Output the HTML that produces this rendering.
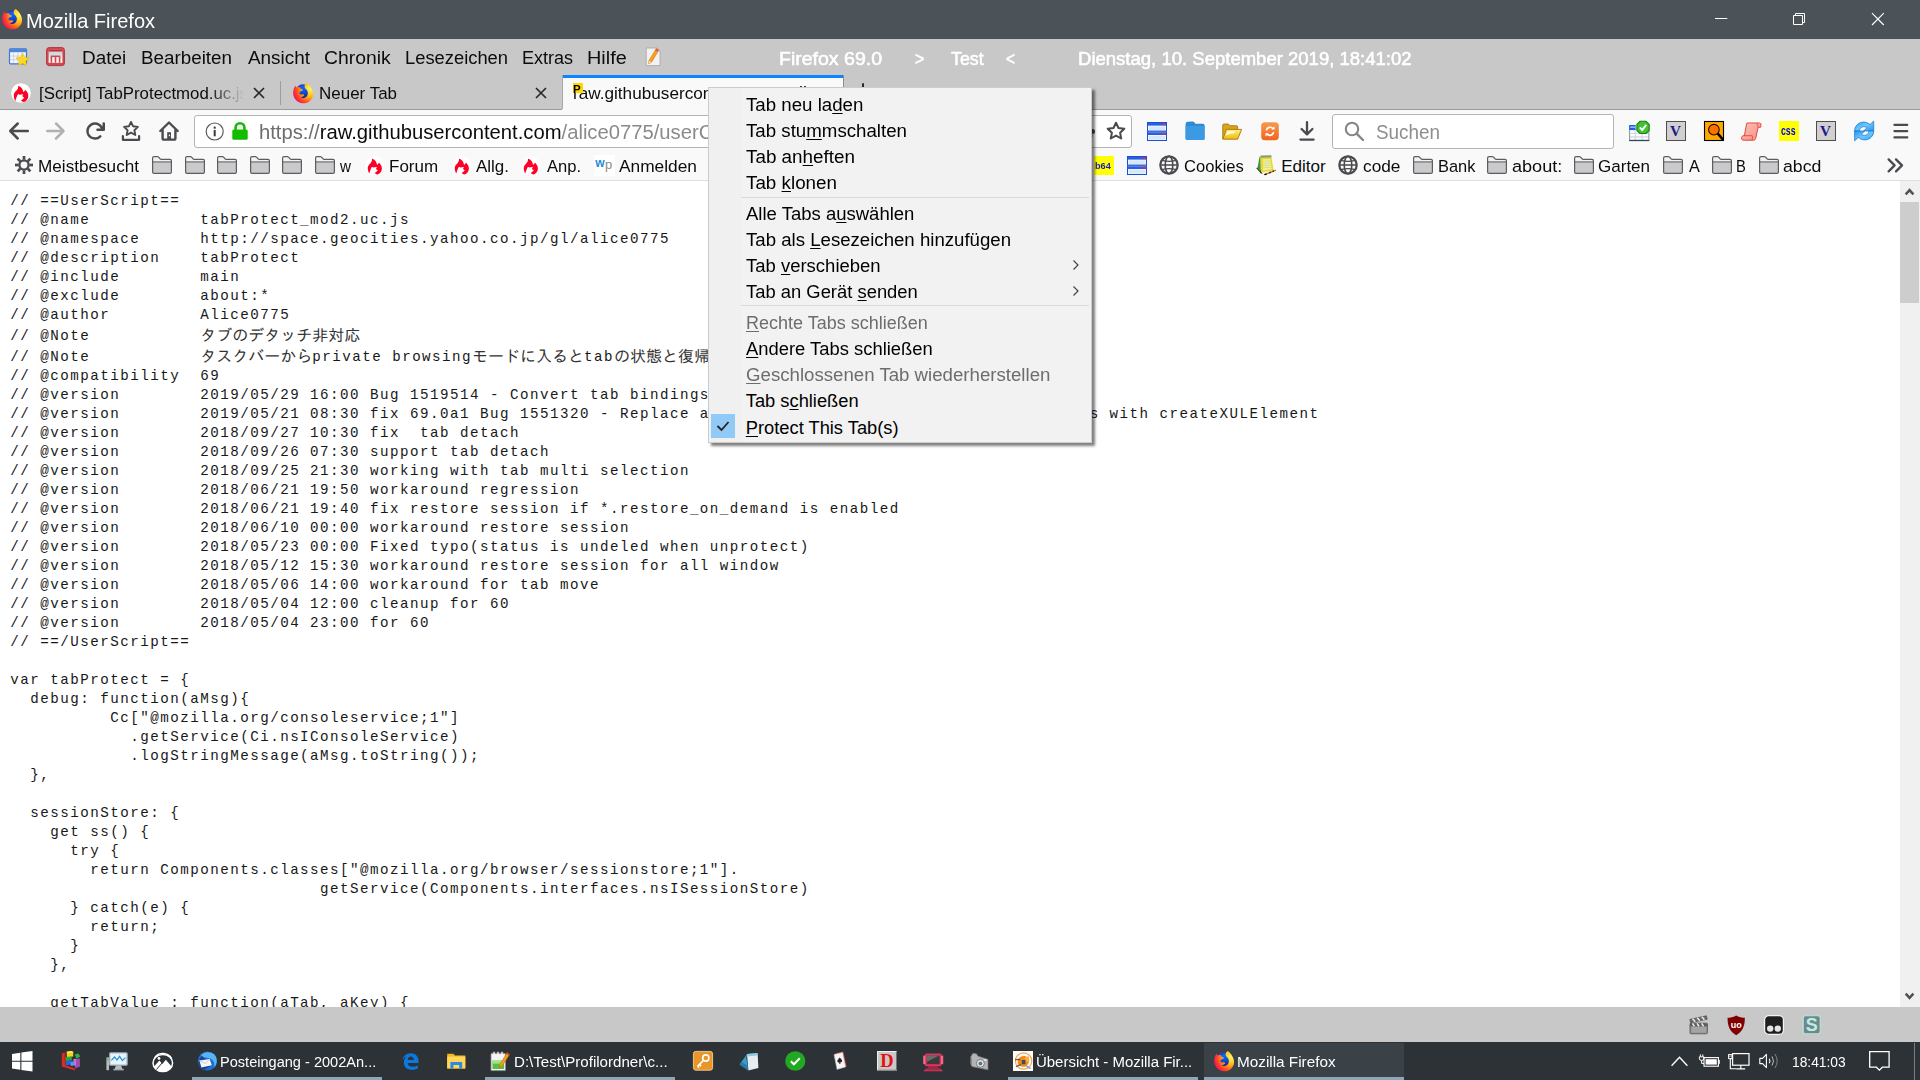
<!DOCTYPE html>
<html lang="de"><head><meta charset="utf-8"><title>Mozilla Firefox</title>
<style>
html,body{margin:0;padding:0;}
body{width:1920px;height:1080px;overflow:hidden;position:relative;background:#fff;font-family:"Liberation Sans",sans-serif;}
.t{position:absolute;white-space:nowrap;line-height:1;transform-origin:0 0;}
.a{position:absolute;}
svg{position:absolute;overflow:visible;}
u{text-decoration:underline;text-underline-offset:2px;text-decoration-thickness:1px;}
pre{margin:0;}
.jp{position:relative;top:1px;letter-spacing:0;font-family:"Liberation Mono","IPAGothic","Noto Sans CJK JP",monospace;font-size:16px;color:#333;}
.jl{display:inline-block;height:21px;line-height:19px;padding-top:2px;box-sizing:border-box;vertical-align:top;}

</style></head>
<body>
<div class="a" style="left:0px;top:0px;width:1920px;height:39px;background:#4b5359;"></div>
<div class="a" style="left:0px;top:39px;width:1920px;height:71px;background:#c8c8c8;"></div>
<div class="a" style="left:0px;top:109px;width:1920px;height:1px;background:#9a9a9a;"></div>
<div class="a" style="left:0px;top:110px;width:1920px;height:70px;background:#f9f9fa;"></div>
<div class="a" style="left:0px;top:180px;width:1920px;height:1px;background:#dedede;"></div>
<div class="a" style="left:0px;top:181px;width:1920px;height:826px;background:#fff;"></div>
<div class="a" style="left:0px;top:1007px;width:1920px;height:35px;background:#c8c8c8;"></div>
<div class="a" style="left:0px;top:1042px;width:1920px;height:38px;background:#2d3237;"></div>
<span class="t" style="left:25.97px;top:11.64px;font-size:19.8px;color:#fff;transform:scaleX(1.0119);">Mozilla Firefox</span>
<span class="t" style="left:82.44px;top:49.21px;font-size:18.3px;color:#0c0c0d;transform:scaleX(1.0345);">Datei</span>
<span class="t" style="left:141.48px;top:49.21px;font-size:18.3px;color:#0c0c0d;transform:scaleX(1.0295);">Bearbeiten</span>
<span class="t" style="left:247.50px;top:49.21px;font-size:18.3px;color:#0c0c0d;transform:scaleX(1.0341);">Ansicht</span>
<span class="t" style="left:323.99px;top:49.21px;font-size:18.3px;color:#0c0c0d;transform:scaleX(1.0573);">Chronik</span>
<span class="t" style="left:404.98px;top:49.21px;font-size:18.3px;color:#0c0c0d;transform:scaleX(1.0037);">Lesezeichen</span>
<span class="t" style="left:521.96px;top:49.21px;font-size:18.3px;color:#0c0c0d;transform:scaleX(0.9860);">Extras</span>
<span class="t" style="left:586.95px;top:49.21px;font-size:18.3px;color:#0c0c0d;transform:scaleX(1.0851);">Hilfe</span>
<span class="t" style="left:779.49px;top:50.01px;font-size:18.3px;color:#fff;transform:scaleX(1.0672);-webkit-text-stroke:0.55px #fff;">Firefox 69.0</span>
<span class="t" style="left:914.80px;top:50.01px;font-size:18.3px;color:#fff;transform:scaleX(0.8799);-webkit-text-stroke:0.55px #fff;">&gt;</span>
<span class="t" style="left:951.00px;top:50.01px;font-size:18.3px;color:#fff;transform:scaleX(0.9723);-webkit-text-stroke:0.55px #fff;">Test</span>
<span class="t" style="left:1006.00px;top:50.01px;font-size:18.3px;color:#fff;transform:scaleX(0.8421);-webkit-text-stroke:0.55px #fff;">&lt;</span>
<span class="t" style="left:1077.70px;top:50.01px;font-size:18.3px;color:#fff;transform:scaleX(1.0131);-webkit-text-stroke:0.55px #fff;">Dienstag, 10. September 2019, 18:41:02</span>
<div class="a" style="left:39px;top:80px;width:206px;height:26px;overflow:hidden;-webkit-mask-image:linear-gradient(to right,#000 170px,transparent 205px);mask-image:linear-gradient(to right,#000 170px,transparent 205px);">
<span class="t" style="left:-0.51px;top:5.22px;font-size:17.1px;color:#0c0c0d;transform:scaleX(0.9836);">[Script] TabProtectmod.uc.js</span>
</div>
<div class="a" style="left:280px;top:81px;width:1px;height:24px;background:#9e9e9e;"></div>
<span class="t" style="left:319.49px;top:85.22px;font-size:17.1px;color:#0c0c0d;transform:scaleX(0.9930);">Neuer Tab</span>
<div class="a" style="left:562px;top:75px;width:282px;height:35px;background:#f9f9fa;"></div>
<div class="a" style="left:562px;top:75px;width:1px;height:34px;background:#a8a8a8;"></div>
<div class="a" style="left:843px;top:75px;width:1px;height:34px;background:#8e8e8e;"></div>
<div class="a" style="left:563px;top:75px;width:280px;height:3px;background:#0a84ff;"></div>
<span class="t" style="left:573.20px;top:85.22px;font-size:17.1px;color:#0c0c0d;transform:scaleX(1.0044);">raw.githubusercontent.com/alice0775</span>
<div class="a" style="left:573px;top:83px;width:10px;height:10.4px;background:#ffd800;"></div>
<span class="t" style="left:573.27px;top:84.50px;font-size:10.4px;color:#000;font-weight:700;transform:scaleX(1.1109);">P</span>
<div class="a" style="left:862px;top:83.4px;width:2px;height:18px;background:#2a2a2e;border-radius:1px;"></div>
<div class="a" style="left:800.3px;top:86px;width:1.6px;height:1px;background:#3a3a3a;"></div>
<div class="a" style="left:804.3px;top:86px;width:1.6px;height:1px;background:#3a3a3a;"></div>
<div class="a" style="left:194px;top:115px;width:936px;height:31px;background:#fff;border:1px solid #b4b4b6;border-radius:3px;"></div>
<span class="t" style="left:259.00px;top:122.09px;font-size:20.1px;color:#0c0c0d;transform:scaleX(1.0068);"><span style="color:#6d6d6e">https://</span>raw.githubusercontent.com<span style="color:#8a8a8b">/alice0775/userChrome.js/master/69/tabProtect_mod2.uc.js</span></span>
<div class="a" style="left:1332px;top:114px;width:280px;height:33px;background:#fff;border:1px solid #b4b4b6;border-radius:3px;"></div>
<span class="t" style="left:1376.48px;top:122.09px;font-size:20.1px;color:#8e8e90;transform:scaleX(0.9396);">Suchen</span>
<span class="t" style="left:38.48px;top:158.22px;font-size:17.1px;color:#0c0c0d;transform:scaleX(1.0030);">Meistbesucht</span>
<span class="t" style="left:340.00px;top:158.22px;font-size:17.1px;color:#0c0c0d;transform:scaleX(0.8900);">w</span>
<span class="t" style="left:388.96px;top:158.22px;font-size:17.1px;color:#0c0c0d;transform:scaleX(0.9939);">Forum</span>
<span class="t" style="left:476.00px;top:158.22px;font-size:17.1px;color:#0c0c0d;transform:scaleX(0.9930);">Allg.</span>
<span class="t" style="left:547.00px;top:158.22px;font-size:17.1px;color:#0c0c0d;transform:scaleX(0.9676);">Anp.</span>
<span class="t" style="left:619.00px;top:158.22px;font-size:17.1px;color:#0c0c0d;transform:scaleX(1.0134);">Anmelden</span>
<span class="t" style="left:1183.58px;top:158.22px;font-size:17.1px;color:#0c0c0d;transform:scaleX(0.9687);">Cookies</span>
<span class="t" style="left:1281.17px;top:158.22px;font-size:17.1px;color:#0c0c0d;">Editor</span>
<span class="t" style="left:1362.65px;top:158.22px;font-size:17.1px;color:#0c0c0d;transform:scaleX(1.0110);">code</span>
<span class="t" style="left:1437.77px;top:158.22px;font-size:17.1px;color:#0c0c0d;transform:scaleX(0.9608);">Bank</span>
<span class="t" style="left:1511.65px;top:158.22px;font-size:17.1px;color:#0c0c0d;transform:scaleX(1.0582);">about:</span>
<span class="t" style="left:1598.47px;top:158.22px;font-size:17.1px;color:#0c0c0d;transform:scaleX(0.9958);">Garten</span>
<span class="t" style="left:1688.60px;top:158.22px;font-size:17.1px;color:#0c0c0d;transform:scaleX(0.9483);">A</span>
<span class="t" style="left:1736.21px;top:158.22px;font-size:17.1px;color:#0c0c0d;transform:scaleX(0.8628);">B</span>
<span class="t" style="left:1783.34px;top:158.22px;font-size:17.1px;color:#0c0c0d;transform:scaleX(1.0338);">abcd</span>
<div class="a" id="content" style="left:0;top:181px;width:1900px;height:826px;overflow:hidden;">
<pre style="position:absolute;left:10.3px;top:11px;font-family:'Liberation Mono','IPAGothic',monospace;font-size:14.2px;letter-spacing:1.48px;line-height:19px;color:#181818;">
// ==UserScript==
// @name           tabProtect_mod2.uc.js
// @namespace      http://space.geocities.yahoo.co.jp/gl/alice0775
// @description    tabProtect
// @include        main
// @exclude        about:*
// @author         Alice0775
<span class="jl">// @Note           <span class="jp">タブのデタッチ非対応</span></span>
<span class="jl">// @Note           <span class="jp">タスクバーから</span>private browsing<span class="jp">モードに入ると</span>tab<span class="jp">の状態と復帰は無視される</span></span>
// @compatibility  69
// @version        2019/05/29 16:00 Bug 1519514 - Convert tab bindings
// @version        2019/05/21 08:30 fix 69.0a1 Bug 1551320 - Replace all createElement calls in XUL documents with createXULElement
// @version        2018/09/27 10:30 fix  tab detach
// @version        2018/09/26 07:30 support tab detach
// @version        2018/09/25 21:30 working with tab multi selection
// @version        2018/06/21 19:50 workaround regression
// @version        2018/06/21 19:40 fix restore session if *.restore_on_demand is enabled
// @version        2018/06/10 00:00 workaround restore session
// @version        2018/05/23 00:00 Fixed typo(status is undeled when unprotect)
// @version        2018/05/12 15:30 workaround restore session for all window
// @version        2018/05/06 14:00 workaround for tab move
// @version        2018/05/04 12:00 cleanup for 60
// @version        2018/05/04 23:00 for 60
// ==/UserScript==

var tabProtect = {
  debug: function(aMsg){
          Cc[&quot;@mozilla.org/consoleservice;1&quot;]
            .getService(Ci.nsIConsoleService)
            .logStringMessage(aMsg.toString());
  },

  sessionStore: {
    get ss() {
      try {
        return Components.classes[&quot;@mozilla.org/browser/sessionstore;1&quot;].
                               getService(Components.interfaces.nsISessionStore)
      } catch(e) {
        return;
      }
    },

    getTabValue : function(aTab, aKey) {
    if (aTab.hasAttribute(&quot;tabProtect&quot;)) return true;
</pre></div>
<div class="a" style="left:1900px;top:181px;width:20px;height:826px;background:#f0f0f0;"></div>
<div class="a" style="left:1900px;top:202px;width:19px;height:101px;background:#cdcdcd;"></div>
<svg style="left:1900px;top:181px" width="20" height="21" viewBox="0 0 20 21"><path d="M5.7 13.3 L9.55 9.2 L13.4 13.3" fill="none" stroke="#505050" stroke-width="2.5"/></svg>
<svg style="left:1900px;top:986px" width="20" height="21" viewBox="0 0 20 21"><path d="M5.7 7.7 L9.55 11.8 L13.4 7.7" fill="none" stroke="#505050" stroke-width="2.5"/></svg>
<svg width="0" height="0" style="left:0;top:0"><defs>
<radialGradient id="ffo" gradientUnits="userSpaceOnUse" cx="17" cy="6" r="20"><stop offset="0" stop-color="#fff36b"/><stop offset="0.22" stop-color="#ffd62e"/><stop offset="0.45" stop-color="#ffa216"/><stop offset="0.68" stop-color="#ff4a28"/><stop offset="0.86" stop-color="#f81a4a"/><stop offset="1" stop-color="#c0108e"/></radialGradient>
<linearGradient id="ffb" x1="0.4" y1="0" x2="0.6" y2="1"><stop offset="0" stop-color="#3a2ab4"/><stop offset="0.25" stop-color="#0a6cf5"/><stop offset="0.6" stop-color="#0a4ad8"/><stop offset="1" stop-color="#2a1264"/></linearGradient>
<linearGradient id="org" x1="0" y1="0" x2="0" y2="1"><stop offset="0" stop-color="#f89a4e"/><stop offset="1" stop-color="#ee6420"/></linearGradient>
<linearGradient id="yfold" x1="0" y1="0" x2="0" y2="1"><stop offset="0" stop-color="#fff27a"/><stop offset="1" stop-color="#f1b90c"/></linearGradient>
<linearGradient id="bsync" x1="0" y1="0" x2="1" y2="1"><stop offset="0" stop-color="#2a9cf0"/><stop offset="0.5" stop-color="#6cc8ff"/><stop offset="1" stop-color="#2a94ec"/></linearGradient>
<linearGradient id="scr" x1="0" y1="0" x2="1" y2="1"><stop offset="0" stop-color="#fdc6ba"/><stop offset="1" stop-color="#f28c7e"/></linearGradient>
<linearGradient id="redcal" x1="0" y1="0" x2="0" y2="1"><stop offset="0" stop-color="#b5d1d6"/><stop offset="1" stop-color="#ffffff"/></linearGradient>
</defs></svg>
<svg style="left:1.9px;top:8.9px" width="20.4" height="20.4" viewBox="0 0 20.1 20.3"><g><circle cx="9.8" cy="8.6" r="7.4" fill="url(#ffb)"/><path d="M13.5 0 C15.4 1.4 17 3 18 5 C19.7 7.6 20.4 10.6 19.5 13.6 C18 18 13.6 20.6 9.4 20.25 C4.6 19.8 0.4 16 0.1 10.8 C-0.1 7.6 0.8 4.8 2.4 2.5 C2.5 3.4 2.9 4.0 3.4 4.5 C4.4 3.8 5.6 3.8 6.6 4.2 C6.8 5.4 8.2 6.2 9.8 6.6 C9.6 7.6 8.4 8 7.4 8.2 C6.6 8.9 6.2 9.8 6.5 10.6 C7.3 11.5 8.4 11.5 9.2 11.2 C9.9 11 10.7 11.3 11.1 12 C10.6 13.2 9.4 14 7.8 14.4 C9.2 15.2 11.2 15.2 12.6 14.2 C14.2 13 15 11 14.6 9 C14.3 7.4 13.2 6.4 12.2 5.4 C11.4 4.4 11.2 2.6 11.9 1.6 C12.3 0.9 12.9 0.4 13.5 0 Z" fill="url(#ffo)"/></g></svg>
<svg style="left:1715px;top:18px" width="13" height="1" viewBox="0 0 13 1"><rect x="0" y="0" width="12.3" height="1" fill="#fff"/></svg>
<svg style="left:1792px;top:12px" width="14" height="14" viewBox="0 0 14 14"><path d="M1.5 3.5 H10.5 V12.5 H1.5 Z M3.5 3.5 V1.5 H12.5 V10.5 H10.5" fill="none" stroke="#fff" stroke-width="1"/></svg>
<svg style="left:1871px;top:12px" width="14" height="14" viewBox="0 0 14 14"><path d="M1 1.2 L12.8 13 M12.8 1.2 L1 13" fill="none" stroke="#fff" stroke-width="1.15"/></svg>
<svg style="left:9px;top:48px" width="21" height="20" viewBox="0 0 21 20"><rect x="0.5" y="0.8" width="17" height="15" rx="1" fill="#f4f7fb" stroke="#3f78d0" stroke-width="1.2"/><rect x="0.5" y="0.8" width="17" height="3.4" fill="#4d86dd"/><path d="M4.6 4.5 V15 M8.8 4.5 V15 M13 4.5 V15 M1 8 H17 M1 11.6 H17" stroke="#c3cedd" stroke-width="0.8"/><path d="M13.6 5.2 L15.5 9.4 L20.2 9.9 L16.7 13 L17.7 17.7 L13.6 15.3 L9.5 17.7 L10.5 13 L7 9.9 L11.7 9.4 Z" fill="#ffd91a" stroke="#e8b800" stroke-width="0.6"/></svg>
<svg style="left:46px;top:47px" width="19" height="19.5" viewBox="0 0 19 19.5"><rect x="0.6" y="0.6" width="17.8" height="18" rx="2.6" fill="#d4474d" stroke="#b5343c" stroke-width="1"/><rect x="2.6" y="2.8" width="13.8" height="13" fill="url(#redcal)"/><rect x="2.6" y="2.8" width="13.8" height="1.7" fill="#c9262e"/><path d="M5.4 15.8 V9.2 H13.6 V15.8 M9.5 9.2 V15.8" fill="none" stroke="#d4474d" stroke-width="1.6"/></svg>
<svg style="left:643px;top:47px" width="19" height="20" viewBox="0 0 19 20"><path d="M3.2 1 H14.2 L17 4 V18.6 H3.2 Z" fill="#f2f2f4" stroke="#a9a9b2" stroke-width="0.9"/><path d="M13.2 1.6 L15.8 3.2 L8.6 15.2 L5.6 16.8 L5.9 13.6 Z" fill="#f6a01e" stroke="#c8760a" stroke-width="0.5"/><path d="M5.9 13.6 L8.6 15.2 L5.6 16.8 Z" fill="#f3d9a8"/><path d="M13.2 1.6 L15.8 3.2 L14.8 4.8 L12.2 3.2Z" fill="#e8505a"/></svg>
<svg style="left:11px;top:83px" width="20" height="20" viewBox="0 0 20 20"><g><circle cx="10" cy="10" r="9.85" fill="#fff"/><path d="M7.0 2.9 C8.6 2.9 10.6 4.6 11.3 5.9 C11.9 7.0 12.2 8.2 12.4 9.3 C12.8 8.6 13.6 7.6 14.5 6.9 C15.2 7.6 16.0 8.6 16.4 9.6 C17.2 11.0 17.5 12.6 17.2 14.2 C16.8 16.4 15.0 18.6 13.0 18.9 C11.8 19.0 10.6 18.2 10.0 17.2 C11.0 17.0 12.4 15.8 13.2 14.4 C12.6 14.4 11.6 13.8 11.3 13.0 C11.6 12.6 11.9 12.0 12.1 11.5 C10.8 11.0 9.4 12.2 8.2 11.6 C7.8 11.4 7.4 11.2 7.0 11.3 C6.2 12.4 5.4 14.6 4.4 17.9 C3.4 16.6 2.7 14.2 2.8 12.1 C3.0 10.6 3.5 9.6 4.4 8.6 C5.4 7.6 6.4 6.6 6.9 5.4 C7.3 4.4 7.4 3.6 7.0 2.9 Z" fill="#ff0026"/></g></svg>
<svg style="left:252.5px;top:86.7px" width="12" height="12" viewBox="0 0 12 12"><path d="M1 1 L11 11 M11 1 L1 11" stroke="#2a2a2e" stroke-width="1.7" fill="none"/></svg>
<svg style="left:293px;top:83px" width="20.4" height="20.4" viewBox="0 0 20.1 20.3"><g><circle cx="9.8" cy="8.6" r="7.4" fill="url(#ffb)"/><path d="M13.5 0 C15.4 1.4 17 3 18 5 C19.7 7.6 20.4 10.6 19.5 13.6 C18 18 13.6 20.6 9.4 20.25 C4.6 19.8 0.4 16 0.1 10.8 C-0.1 7.6 0.8 4.8 2.4 2.5 C2.5 3.4 2.9 4.0 3.4 4.5 C4.4 3.8 5.6 3.8 6.6 4.2 C6.8 5.4 8.2 6.2 9.8 6.6 C9.6 7.6 8.4 8 7.4 8.2 C6.6 8.9 6.2 9.8 6.5 10.6 C7.3 11.5 8.4 11.5 9.2 11.2 C9.9 11 10.7 11.3 11.1 12 C10.6 13.2 9.4 14 7.8 14.4 C9.2 15.2 11.2 15.2 12.6 14.2 C14.2 13 15 11 14.6 9 C14.3 7.4 13.2 6.4 12.2 5.4 C11.4 4.4 11.2 2.6 11.9 1.6 C12.3 0.9 12.9 0.4 13.5 0 Z" fill="url(#ffo)"/></g></svg>
<svg style="left:534.5px;top:86.7px" width="12" height="12" viewBox="0 0 12 12"><path d="M1 1 L11 11 M11 1 L1 11" stroke="#2a2a2e" stroke-width="1.7" fill="none"/></svg>
<svg style="left:9px;top:121px" width="20" height="20" viewBox="0 0 16 16"><path d="M15 7H3.414l4.293-4.293a1 1 0 0 0-1.414-1.414l-6 6a1 1 0 0 0 0 1.414l6 6a1 1 0 0 0 1.414-1.414L3.414 9H15a1 1 0 0 0 0-2z" fill="#4a4a4f"/></svg>
<svg style="left:46px;top:121px" width="20" height="20" viewBox="0 0 16 16"><path d="M14.707 7.293l-6-6a1 1 0 0 0-1.414 1.414L11.586 7H1a1 1 0 0 0 0 2h10.586l-4.293 4.293a1 1 0 1 0 1.414 1.414l6-6a1 1 0 0 0 0-1.414z" fill="#b1b1b3"/></svg>
<svg style="left:84.5px;top:121px" width="20" height="20" viewBox="0 0 16 16"><path d="M15 1a1 1 0 0 0-1 1v2.418A6.995 6.995 0 1 0 8 15a6.954 6.954 0 0 0 4.95-2.05 1 1 0 0 0-1.414-1.414A5.019 5.019 0 1 1 12.549 6H10a1 1 0 0 0 0 2h5a1 1 0 0 0 1-1V2a1 1 0 0 0-1-1z" fill="#4a4a4f"/></svg>
<svg style="left:121px;top:120px" width="20" height="22" viewBox="0 0 20 22"><path d="M10 1.9 L12.1 6.3 L16.9 6.9 L13.4 10.2 L14.3 15 L10 12.6 L5.7 15 L6.6 10.2 L3.1 6.9 L7.9 6.3 Z" fill="none" stroke="#4a4a4f" stroke-width="1.9" stroke-linejoin="round"/><path d="M1.9 16 V19.8 H18.1 V16" fill="none" stroke="#4a4a4f" stroke-width="2.2" stroke-linecap="round" stroke-linejoin="round"/></svg>
<svg style="left:159px;top:121px" width="20" height="20" viewBox="0 0 20 20"><path d="M1.3 10 L10 1.5 L18.7 10 M3.6 8.6 V17.2 Q3.6 18.6 5 18.6 H15 Q16.4 18.6 16.4 17.2 V8.6" fill="none" stroke="#4a4a4f" stroke-width="2.4" stroke-linecap="round" stroke-linejoin="round"/><rect x="8.2" y="11.2" width="3.8" height="7" fill="#4a4a4f"/><rect x="9.8" y="13.6" width="1.2" height="1.6" fill="#f9f9fa"/></svg>
<svg style="left:205px;top:121.5px" width="19" height="19" viewBox="0 0 19 19"><circle cx="9.7" cy="9.5" r="8.5" fill="none" stroke="#5a5a5e" stroke-width="1.2"/><rect x="8.7" y="8" width="2" height="6.3" fill="#3a3a3e"/><rect x="8.7" y="4.6" width="2" height="2.1" fill="#3a3a3e"/></svg>
<svg style="left:232px;top:122px" width="16" height="18" viewBox="0 0 16 18"><path d="M3.6 8 V5.6 A4.4 4.4 0 0 1 12.4 5.6 V8" fill="none" stroke="#12bc00" stroke-width="2.6"/><rect x="0.3" y="7.4" width="15.4" height="10.4" rx="1.6" fill="#12bc00"/></svg>
<div class="a" style="left:1090px;top:128.5px;width:5px;height:5px;border-radius:3px;background:#4a4a4f;"></div>
<svg style="left:1106px;top:121px" width="20" height="20" viewBox="0 0 20 20"><path d="M10 1.7 L12.5 7 L18.3 7.7 L14.1 11.7 L15.2 17.5 L10 14.6 L4.8 17.5 L5.9 11.7 L1.7 7.7 L7.5 7 Z" fill="none" stroke="#4a4a4f" stroke-width="2" stroke-linejoin="round"/></svg>
<svg style="left:1147px;top:122px" width="20" height="19" viewBox="0 0 20 19"><g><rect x="0.5" y="0.5" width="19" height="8.6" fill="#eaf4ff" stroke="#1f4fd0" stroke-width="1"/><rect x="1" y="1" width="18" height="2.6" fill="#2a5fe0"/><rect x="15.6" y="1.2" width="2.4" height="2" fill="#e8332a"/><rect x="2" y="4.6" width="16" height="3.4" fill="#d3e8fb"/><rect x="0.5" y="9.9" width="19" height="8.6" fill="#eaf4ff" stroke="#1f4fd0" stroke-width="1"/><rect x="1" y="10.4" width="18" height="2.6" fill="#2a5fe0"/><rect x="15.6" y="10.6" width="2.4" height="2" fill="#e8332a"/><rect x="2" y="14" width="16" height="3.4" fill="#d3e8fb"/></g></svg>
<svg style="left:1185px;top:121px" width="20" height="19.5" viewBox="0 0 20 19.5"><path d="M0.6 3 Q0.6 1.2 2.4 0.8 L7.6 0.4 Q8.8 0.4 9.6 1.6 L10.4 2.8 L17.8 2.8 Q19.6 2.8 19.6 4.6 L19.6 17.4 Q19.6 19 18 19 L2.2 19 Q0.6 19 0.6 17.4 Z" fill="#2f8ad4"/><path d="M0.6 5 L19.6 5 L19.6 17.4 Q19.6 19 18 19 L2.2 19 Q0.6 19 0.6 17.4 Z" fill="#3b9ae1"/></svg>
<svg style="left:1222px;top:123px" width="20" height="17" viewBox="0 0 20 17"><path d="M0.8 16 V2.2 Q0.8 1 2 1 H6.4 L8 2.8 H14.6 Q15.6 2.8 15.6 3.8 V6" fill="#d9a520" stroke="#a9740c" stroke-width="0.9"/><path d="M0.8 16.2 L4.4 6.4 H19.6 L15.6 16.2 Z" fill="url(#yfold)" stroke="#a9740c" stroke-width="0.9" stroke-linejoin="round"/><path d="M3.4 12.8 L5.6 8.2 H13.2 L12.2 10.2 C9 10.2 6 11 3.4 12.8Z" fill="#fffbd8"/></svg>
<svg style="left:1261px;top:121.5px" width="18" height="18.5" viewBox="0 0 18 18.5"><rect x="0.2" y="0.2" width="17.6" height="18" rx="3.6" fill="url(#org)"/><path d="M5.4 8.4 A3.8 3.8 0 0 1 12 6.6 M12.6 10.2 A3.8 3.8 0 0 1 6 12" fill="none" stroke="#fff" stroke-width="1.7"/><path d="M10.4 7.4 L13.6 7.4 L13.4 4.2 Z M7.6 11.2 L4.4 11.2 L4.6 14.4 Z" fill="#fff"/></svg>
<svg style="left:1299px;top:121px" width="16" height="20" viewBox="0 0 16 20"><path d="M8 1.2 V13 M2.6 8 L8 13.4 L13.4 8" fill="none" stroke="#4a4a4f" stroke-width="2.3" stroke-linecap="round" stroke-linejoin="round"/><path d="M1.4 18.6 H14.6" stroke="#4a4a4f" stroke-width="2.3" stroke-linecap="round"/></svg>
<svg style="left:1344px;top:121px" width="21" height="21" viewBox="0 0 21 21"><circle cx="8" cy="8" r="6.2" fill="none" stroke="#868688" stroke-width="2.1"/><path d="M12.6 12.6 L19 19" stroke="#868688" stroke-width="2.4" stroke-linecap="round"/></svg>
<svg style="left:1629px;top:121px" width="20.5" height="20" viewBox="0 0 20.5 20"><rect x="0.5" y="4.3" width="19.5" height="15.2" fill="#fff"/><path d="M0.5 8.8 H20 M0.5 12.4 H20 M0.5 16 H20 M6.4 8.8 V19.5 M13 8.8 V19.5" stroke="#d3dce8" stroke-width="1.3"/><path d="M0.6 4.3 V19.4 H19.9 V10" fill="none" stroke="#8894a4" stroke-width="1"/><path d="M0.2 19.5 H20.3" stroke="#36465a" stroke-width="1.3"/><rect x="0.2" y="4" width="6.4" height="5" fill="#1f5fe0"/><rect x="1.2" y="5.4" width="5.2" height="1.6" fill="#7fc8ff"/><path d="M11 0.3 H17 L20.2 3.4 V9.4 L17 12.5 H11 L7.9 9.4 V3.4 Z" fill="#45c030" stroke="#128010" stroke-width="1.1"/><path d="M10.9 6.4 L13.2 9 L17.2 3.8" fill="none" stroke="#fff" stroke-width="2"/></svg>
<svg style="left:1666px;top:121px" width="20" height="20" viewBox="0 0 20 20"><g><rect x="0.5" y="0.5" width="19" height="19" fill="#d1cfcf" stroke="#4e4e4e" stroke-width="1"/><text x="9.6" y="14.9" text-anchor="middle" font-family="Liberation Serif,serif" font-weight="700" font-size="15.2" fill="#19198c">V</text></g></svg>
<svg style="left:1704px;top:121px" width="20" height="20" viewBox="0 0 20 20"><rect x="0.5" y="0.5" width="19" height="19" fill="#ffa900" stroke="#000" stroke-width="1.1"/><path d="M13.6 12.4 L19 18.6" stroke="#000" stroke-width="2.4"/><circle cx="9.9" cy="8.7" r="5.3" fill="#ff7000" stroke="#1a0a00" stroke-width="1.1"/></svg>
<svg style="left:1741px;top:121.6px" width="20.5" height="19" viewBox="0 0 20.5 19"><path d="M6 1 L18.6 1 Q20.4 1.4 20 3.4 L19.4 5.4 L17.2 5.2 L14.6 16.6 Q14.2 18.2 12.6 18.2 L2 18.2 Q0 17.6 0.6 15.4 Q1 13.8 2.6 13.6 L3.4 13.6 L5.4 3 Q5.6 1.4 6 1 Z" fill="url(#scr)" stroke="#e3473f" stroke-width="1"/><path d="M2.6 13.7 L11.2 13.7 Q12.2 15.8 10.8 18" fill="none" stroke="#e3473f" stroke-width="0.9"/><path d="M17.2 5.2 L16 1.4" fill="none" stroke="#e3473f" stroke-width="0.8"/></svg>
<div class="a" style="left:1779px;top:121px;width:20px;height:20px;background:#ffff00;"></div>
<span class="t" style="left:1781.00px;top:124.52px;font-size:12.5px;color:#0000f0;font-weight:700;transform:scaleX(0.7002);">css</span>
<svg style="left:1816px;top:121px" width="20" height="20" viewBox="0 0 20 20"><g><rect x="0.5" y="0.5" width="19" height="19" fill="#d1cfcf" stroke="#4e4e4e" stroke-width="1"/><text x="9.6" y="14.9" text-anchor="middle" font-family="Liberation Serif,serif" font-weight="700" font-size="15.2" fill="#19198c">V</text></g></svg>
<svg style="left:1854px;top:121px" width="20" height="20" viewBox="0 0 20 20"><path d="M0.6 10 C0.6 4 6 0.4 11 1.2 C13 1.5 14.8 2.4 16 3.6 L19.7 0.1 L19.7 10 L9.6 10 L12.9 6.8 C11.4 5.4 8.6 5.1 6.9 6.7 C5.9 7.6 5.5 8.7 5.4 10 Z" fill="url(#bsync)" stroke="#1470cc" stroke-width="0.7"/><path d="M0.6 10 C0.6 4 6 0.4 11 1.2 C13 1.5 14.8 2.4 16 3.6 L19.7 0.1 L19.7 10 L9.6 10 L12.9 6.8 C11.4 5.4 8.6 5.1 6.9 6.7 C5.9 7.6 5.5 8.7 5.4 10 Z" fill="url(#bsync)" stroke="#1470cc" stroke-width="0.7" transform="rotate(180 10.15 10)"/></svg>
<svg style="left:1893px;top:124px" width="16" height="15" viewBox="0 0 16 15"><path d="M1.4 0.8 H14.3 M1.4 7.1 H14.3 M1.4 13.4 H14.3" stroke="#4a4a4f" stroke-width="2.2" stroke-linecap="round"/></svg>
<svg style="left:15px;top:156px" width="18" height="18" viewBox="0 0 18 18"><g transform="translate(9 9)"><circle r="4.6" fill="none" stroke="#4a4a4f" stroke-width="2.3"/><rect x="-1.35" y="-9" width="2.7" height="3.6" fill="#4a4a4f" transform="rotate(0)"/><rect x="-1.35" y="-9" width="2.7" height="3.6" fill="#4a4a4f" transform="rotate(45)"/><rect x="-1.35" y="-9" width="2.7" height="3.6" fill="#4a4a4f" transform="rotate(90)"/><rect x="-1.35" y="-9" width="2.7" height="3.6" fill="#4a4a4f" transform="rotate(135)"/><rect x="-1.35" y="-9" width="2.7" height="3.6" fill="#4a4a4f" transform="rotate(180)"/><rect x="-1.35" y="-9" width="2.7" height="3.6" fill="#4a4a4f" transform="rotate(225)"/><rect x="-1.35" y="-9" width="2.7" height="3.6" fill="#4a4a4f" transform="rotate(270)"/><rect x="-1.35" y="-9" width="2.7" height="3.6" fill="#4a4a4f" transform="rotate(315)"/></g></svg>
<svg style="left:152px;top:156px" width="20" height="18" viewBox="0 0 20 18"><g><path d="M0.6 2 Q0.6 0.6 2 0.6 L5.4 0.6 Q6 0.6 6.5 1.1 L8.3 3 Q8.6 3.3 9.2 3.3 L18 3.3 Q19.4 3.3 19.4 4.7 L19.4 16 Q19.4 17.4 18 17.4 L2 17.4 Q0.6 17.4 0.6 16 Z" fill="#f3f3f4"/><path d="M1 6 H19 V16 Q19 17 18 17 H2 Q1 17 1 16Z" fill="#cacacc"/><path d="M0.8 5.9 H19.2" stroke="#646466" stroke-width="1.1" fill="none"/><path d="M0.6 2 Q0.6 0.6 2 0.6 L5.4 0.6 Q6 0.6 6.5 1.1 L8.3 3 Q8.6 3.3 9.2 3.3 L18 3.3 Q19.4 3.3 19.4 4.7 L19.4 16 Q19.4 17.4 18 17.4 L2 17.4 Q0.6 17.4 0.6 16 Z" fill="none" stroke="#5c5c5e" stroke-width="1.2"/></g></svg>
<svg style="left:184.6px;top:156px" width="20" height="18" viewBox="0 0 20 18"><g><path d="M0.6 2 Q0.6 0.6 2 0.6 L5.4 0.6 Q6 0.6 6.5 1.1 L8.3 3 Q8.6 3.3 9.2 3.3 L18 3.3 Q19.4 3.3 19.4 4.7 L19.4 16 Q19.4 17.4 18 17.4 L2 17.4 Q0.6 17.4 0.6 16 Z" fill="#f3f3f4"/><path d="M1 6 H19 V16 Q19 17 18 17 H2 Q1 17 1 16Z" fill="#cacacc"/><path d="M0.8 5.9 H19.2" stroke="#646466" stroke-width="1.1" fill="none"/><path d="M0.6 2 Q0.6 0.6 2 0.6 L5.4 0.6 Q6 0.6 6.5 1.1 L8.3 3 Q8.6 3.3 9.2 3.3 L18 3.3 Q19.4 3.3 19.4 4.7 L19.4 16 Q19.4 17.4 18 17.4 L2 17.4 Q0.6 17.4 0.6 16 Z" fill="none" stroke="#5c5c5e" stroke-width="1.2"/></g></svg>
<svg style="left:217.2px;top:156px" width="20" height="18" viewBox="0 0 20 18"><g><path d="M0.6 2 Q0.6 0.6 2 0.6 L5.4 0.6 Q6 0.6 6.5 1.1 L8.3 3 Q8.6 3.3 9.2 3.3 L18 3.3 Q19.4 3.3 19.4 4.7 L19.4 16 Q19.4 17.4 18 17.4 L2 17.4 Q0.6 17.4 0.6 16 Z" fill="#f3f3f4"/><path d="M1 6 H19 V16 Q19 17 18 17 H2 Q1 17 1 16Z" fill="#cacacc"/><path d="M0.8 5.9 H19.2" stroke="#646466" stroke-width="1.1" fill="none"/><path d="M0.6 2 Q0.6 0.6 2 0.6 L5.4 0.6 Q6 0.6 6.5 1.1 L8.3 3 Q8.6 3.3 9.2 3.3 L18 3.3 Q19.4 3.3 19.4 4.7 L19.4 16 Q19.4 17.4 18 17.4 L2 17.4 Q0.6 17.4 0.6 16 Z" fill="none" stroke="#5c5c5e" stroke-width="1.2"/></g></svg>
<svg style="left:249.8px;top:156px" width="20" height="18" viewBox="0 0 20 18"><g><path d="M0.6 2 Q0.6 0.6 2 0.6 L5.4 0.6 Q6 0.6 6.5 1.1 L8.3 3 Q8.6 3.3 9.2 3.3 L18 3.3 Q19.4 3.3 19.4 4.7 L19.4 16 Q19.4 17.4 18 17.4 L2 17.4 Q0.6 17.4 0.6 16 Z" fill="#f3f3f4"/><path d="M1 6 H19 V16 Q19 17 18 17 H2 Q1 17 1 16Z" fill="#cacacc"/><path d="M0.8 5.9 H19.2" stroke="#646466" stroke-width="1.1" fill="none"/><path d="M0.6 2 Q0.6 0.6 2 0.6 L5.4 0.6 Q6 0.6 6.5 1.1 L8.3 3 Q8.6 3.3 9.2 3.3 L18 3.3 Q19.4 3.3 19.4 4.7 L19.4 16 Q19.4 17.4 18 17.4 L2 17.4 Q0.6 17.4 0.6 16 Z" fill="none" stroke="#5c5c5e" stroke-width="1.2"/></g></svg>
<svg style="left:282.4px;top:156px" width="20" height="18" viewBox="0 0 20 18"><g><path d="M0.6 2 Q0.6 0.6 2 0.6 L5.4 0.6 Q6 0.6 6.5 1.1 L8.3 3 Q8.6 3.3 9.2 3.3 L18 3.3 Q19.4 3.3 19.4 4.7 L19.4 16 Q19.4 17.4 18 17.4 L2 17.4 Q0.6 17.4 0.6 16 Z" fill="#f3f3f4"/><path d="M1 6 H19 V16 Q19 17 18 17 H2 Q1 17 1 16Z" fill="#cacacc"/><path d="M0.8 5.9 H19.2" stroke="#646466" stroke-width="1.1" fill="none"/><path d="M0.6 2 Q0.6 0.6 2 0.6 L5.4 0.6 Q6 0.6 6.5 1.1 L8.3 3 Q8.6 3.3 9.2 3.3 L18 3.3 Q19.4 3.3 19.4 4.7 L19.4 16 Q19.4 17.4 18 17.4 L2 17.4 Q0.6 17.4 0.6 16 Z" fill="none" stroke="#5c5c5e" stroke-width="1.2"/></g></svg>
<svg style="left:315px;top:156px" width="20" height="18" viewBox="0 0 20 18"><g><path d="M0.6 2 Q0.6 0.6 2 0.6 L5.4 0.6 Q6 0.6 6.5 1.1 L8.3 3 Q8.6 3.3 9.2 3.3 L18 3.3 Q19.4 3.3 19.4 4.7 L19.4 16 Q19.4 17.4 18 17.4 L2 17.4 Q0.6 17.4 0.6 16 Z" fill="#f3f3f4"/><path d="M1 6 H19 V16 Q19 17 18 17 H2 Q1 17 1 16Z" fill="#cacacc"/><path d="M0.8 5.9 H19.2" stroke="#646466" stroke-width="1.1" fill="none"/><path d="M0.6 2 Q0.6 0.6 2 0.6 L5.4 0.6 Q6 0.6 6.5 1.1 L8.3 3 Q8.6 3.3 9.2 3.3 L18 3.3 Q19.4 3.3 19.4 4.7 L19.4 16 Q19.4 17.4 18 17.4 L2 17.4 Q0.6 17.4 0.6 16 Z" fill="none" stroke="#5c5c5e" stroke-width="1.2"/></g></svg>
<svg style="left:1413px;top:156px" width="20" height="18" viewBox="0 0 20 18"><g><path d="M0.6 2 Q0.6 0.6 2 0.6 L5.4 0.6 Q6 0.6 6.5 1.1 L8.3 3 Q8.6 3.3 9.2 3.3 L18 3.3 Q19.4 3.3 19.4 4.7 L19.4 16 Q19.4 17.4 18 17.4 L2 17.4 Q0.6 17.4 0.6 16 Z" fill="#f3f3f4"/><path d="M1 6 H19 V16 Q19 17 18 17 H2 Q1 17 1 16Z" fill="#cacacc"/><path d="M0.8 5.9 H19.2" stroke="#646466" stroke-width="1.1" fill="none"/><path d="M0.6 2 Q0.6 0.6 2 0.6 L5.4 0.6 Q6 0.6 6.5 1.1 L8.3 3 Q8.6 3.3 9.2 3.3 L18 3.3 Q19.4 3.3 19.4 4.7 L19.4 16 Q19.4 17.4 18 17.4 L2 17.4 Q0.6 17.4 0.6 16 Z" fill="none" stroke="#5c5c5e" stroke-width="1.2"/></g></svg>
<svg style="left:1487px;top:156px" width="20" height="18" viewBox="0 0 20 18"><g><path d="M0.6 2 Q0.6 0.6 2 0.6 L5.4 0.6 Q6 0.6 6.5 1.1 L8.3 3 Q8.6 3.3 9.2 3.3 L18 3.3 Q19.4 3.3 19.4 4.7 L19.4 16 Q19.4 17.4 18 17.4 L2 17.4 Q0.6 17.4 0.6 16 Z" fill="#f3f3f4"/><path d="M1 6 H19 V16 Q19 17 18 17 H2 Q1 17 1 16Z" fill="#cacacc"/><path d="M0.8 5.9 H19.2" stroke="#646466" stroke-width="1.1" fill="none"/><path d="M0.6 2 Q0.6 0.6 2 0.6 L5.4 0.6 Q6 0.6 6.5 1.1 L8.3 3 Q8.6 3.3 9.2 3.3 L18 3.3 Q19.4 3.3 19.4 4.7 L19.4 16 Q19.4 17.4 18 17.4 L2 17.4 Q0.6 17.4 0.6 16 Z" fill="none" stroke="#5c5c5e" stroke-width="1.2"/></g></svg>
<svg style="left:1574px;top:156px" width="20" height="18" viewBox="0 0 20 18"><g><path d="M0.6 2 Q0.6 0.6 2 0.6 L5.4 0.6 Q6 0.6 6.5 1.1 L8.3 3 Q8.6 3.3 9.2 3.3 L18 3.3 Q19.4 3.3 19.4 4.7 L19.4 16 Q19.4 17.4 18 17.4 L2 17.4 Q0.6 17.4 0.6 16 Z" fill="#f3f3f4"/><path d="M1 6 H19 V16 Q19 17 18 17 H2 Q1 17 1 16Z" fill="#cacacc"/><path d="M0.8 5.9 H19.2" stroke="#646466" stroke-width="1.1" fill="none"/><path d="M0.6 2 Q0.6 0.6 2 0.6 L5.4 0.6 Q6 0.6 6.5 1.1 L8.3 3 Q8.6 3.3 9.2 3.3 L18 3.3 Q19.4 3.3 19.4 4.7 L19.4 16 Q19.4 17.4 18 17.4 L2 17.4 Q0.6 17.4 0.6 16 Z" fill="none" stroke="#5c5c5e" stroke-width="1.2"/></g></svg>
<svg style="left:1663px;top:156px" width="20" height="18" viewBox="0 0 20 18"><g><path d="M0.6 2 Q0.6 0.6 2 0.6 L5.4 0.6 Q6 0.6 6.5 1.1 L8.3 3 Q8.6 3.3 9.2 3.3 L18 3.3 Q19.4 3.3 19.4 4.7 L19.4 16 Q19.4 17.4 18 17.4 L2 17.4 Q0.6 17.4 0.6 16 Z" fill="#f3f3f4"/><path d="M1 6 H19 V16 Q19 17 18 17 H2 Q1 17 1 16Z" fill="#cacacc"/><path d="M0.8 5.9 H19.2" stroke="#646466" stroke-width="1.1" fill="none"/><path d="M0.6 2 Q0.6 0.6 2 0.6 L5.4 0.6 Q6 0.6 6.5 1.1 L8.3 3 Q8.6 3.3 9.2 3.3 L18 3.3 Q19.4 3.3 19.4 4.7 L19.4 16 Q19.4 17.4 18 17.4 L2 17.4 Q0.6 17.4 0.6 16 Z" fill="none" stroke="#5c5c5e" stroke-width="1.2"/></g></svg>
<svg style="left:1711.5px;top:156px" width="20" height="18" viewBox="0 0 20 18"><g><path d="M0.6 2 Q0.6 0.6 2 0.6 L5.4 0.6 Q6 0.6 6.5 1.1 L8.3 3 Q8.6 3.3 9.2 3.3 L18 3.3 Q19.4 3.3 19.4 4.7 L19.4 16 Q19.4 17.4 18 17.4 L2 17.4 Q0.6 17.4 0.6 16 Z" fill="#f3f3f4"/><path d="M1 6 H19 V16 Q19 17 18 17 H2 Q1 17 1 16Z" fill="#cacacc"/><path d="M0.8 5.9 H19.2" stroke="#646466" stroke-width="1.1" fill="none"/><path d="M0.6 2 Q0.6 0.6 2 0.6 L5.4 0.6 Q6 0.6 6.5 1.1 L8.3 3 Q8.6 3.3 9.2 3.3 L18 3.3 Q19.4 3.3 19.4 4.7 L19.4 16 Q19.4 17.4 18 17.4 L2 17.4 Q0.6 17.4 0.6 16 Z" fill="none" stroke="#5c5c5e" stroke-width="1.2"/></g></svg>
<svg style="left:1759px;top:156px" width="20" height="18" viewBox="0 0 20 18"><g><path d="M0.6 2 Q0.6 0.6 2 0.6 L5.4 0.6 Q6 0.6 6.5 1.1 L8.3 3 Q8.6 3.3 9.2 3.3 L18 3.3 Q19.4 3.3 19.4 4.7 L19.4 16 Q19.4 17.4 18 17.4 L2 17.4 Q0.6 17.4 0.6 16 Z" fill="#f3f3f4"/><path d="M1 6 H19 V16 Q19 17 18 17 H2 Q1 17 1 16Z" fill="#cacacc"/><path d="M0.8 5.9 H19.2" stroke="#646466" stroke-width="1.1" fill="none"/><path d="M0.6 2 Q0.6 0.6 2 0.6 L5.4 0.6 Q6 0.6 6.5 1.1 L8.3 3 Q8.6 3.3 9.2 3.3 L18 3.3 Q19.4 3.3 19.4 4.7 L19.4 16 Q19.4 17.4 18 17.4 L2 17.4 Q0.6 17.4 0.6 16 Z" fill="none" stroke="#5c5c5e" stroke-width="1.2"/></g></svg>
<svg style="left:365px;top:155.5px" width="19.5" height="19.5" viewBox="0 0 20 20"><g><circle cx="10" cy="10" r="9.85" fill="#fff"/><path d="M7.0 2.9 C8.6 2.9 10.6 4.6 11.3 5.9 C11.9 7.0 12.2 8.2 12.4 9.3 C12.8 8.6 13.6 7.6 14.5 6.9 C15.2 7.6 16.0 8.6 16.4 9.6 C17.2 11.0 17.5 12.6 17.2 14.2 C16.8 16.4 15.0 18.6 13.0 18.9 C11.8 19.0 10.6 18.2 10.0 17.2 C11.0 17.0 12.4 15.8 13.2 14.4 C12.6 14.4 11.6 13.8 11.3 13.0 C11.6 12.6 11.9 12.0 12.1 11.5 C10.8 11.0 9.4 12.2 8.2 11.6 C7.8 11.4 7.4 11.2 7.0 11.3 C6.2 12.4 5.4 14.6 4.4 17.9 C3.4 16.6 2.7 14.2 2.8 12.1 C3.0 10.6 3.5 9.6 4.4 8.6 C5.4 7.6 6.4 6.6 6.9 5.4 C7.3 4.4 7.4 3.6 7.0 2.9 Z" fill="#ff0026"/></g></svg>
<svg style="left:451.5px;top:155.5px" width="19.5" height="19.5" viewBox="0 0 20 20"><g><circle cx="10" cy="10" r="9.85" fill="#fff"/><path d="M7.0 2.9 C8.6 2.9 10.6 4.6 11.3 5.9 C11.9 7.0 12.2 8.2 12.4 9.3 C12.8 8.6 13.6 7.6 14.5 6.9 C15.2 7.6 16.0 8.6 16.4 9.6 C17.2 11.0 17.5 12.6 17.2 14.2 C16.8 16.4 15.0 18.6 13.0 18.9 C11.8 19.0 10.6 18.2 10.0 17.2 C11.0 17.0 12.4 15.8 13.2 14.4 C12.6 14.4 11.6 13.8 11.3 13.0 C11.6 12.6 11.9 12.0 12.1 11.5 C10.8 11.0 9.4 12.2 8.2 11.6 C7.8 11.4 7.4 11.2 7.0 11.3 C6.2 12.4 5.4 14.6 4.4 17.9 C3.4 16.6 2.7 14.2 2.8 12.1 C3.0 10.6 3.5 9.6 4.4 8.6 C5.4 7.6 6.4 6.6 6.9 5.4 C7.3 4.4 7.4 3.6 7.0 2.9 Z" fill="#ff0026"/></g></svg>
<svg style="left:521px;top:155.5px" width="19.5" height="19.5" viewBox="0 0 20 20"><g><circle cx="10" cy="10" r="9.85" fill="#fff"/><path d="M7.0 2.9 C8.6 2.9 10.6 4.6 11.3 5.9 C11.9 7.0 12.2 8.2 12.4 9.3 C12.8 8.6 13.6 7.6 14.5 6.9 C15.2 7.6 16.0 8.6 16.4 9.6 C17.2 11.0 17.5 12.6 17.2 14.2 C16.8 16.4 15.0 18.6 13.0 18.9 C11.8 19.0 10.6 18.2 10.0 17.2 C11.0 17.0 12.4 15.8 13.2 14.4 C12.6 14.4 11.6 13.8 11.3 13.0 C11.6 12.6 11.9 12.0 12.1 11.5 C10.8 11.0 9.4 12.2 8.2 11.6 C7.8 11.4 7.4 11.2 7.0 11.3 C6.2 12.4 5.4 14.6 4.4 17.9 C3.4 16.6 2.7 14.2 2.8 12.1 C3.0 10.6 3.5 9.6 4.4 8.6 C5.4 7.6 6.4 6.6 6.9 5.4 C7.3 4.4 7.4 3.6 7.0 2.9 Z" fill="#ff0026"/></g></svg>
<svg style="left:594px;top:155px" width="21" height="21" viewBox="0 0 21 21"><rect width="21" height="21" fill="#fff"/><text x="1.2" y="12.4" font-family="Liberation Sans,sans-serif" font-weight="700" font-size="12" fill="#1e8cd8">w</text><text x="11" y="14.2" font-family="Liberation Sans,sans-serif" font-weight="400" font-size="13" fill="#8c8c8c">p</text></svg>
<div class="a" style="left:1094px;top:156px;width:20px;height:19px;background:#ffff00;"></div>
<span class="t" style="left:1095.27px;top:161.46px;font-size:9.5px;color:#1a1acc;font-weight:700;transform:scaleX(0.9655);">b64</span>
<svg style="left:1127px;top:156px" width="20" height="19" viewBox="0 0 20 19"><g><rect x="0.5" y="0.5" width="19" height="8.6" fill="#eaf4ff" stroke="#1f4fd0" stroke-width="1"/><rect x="1" y="1" width="18" height="2.6" fill="#2a5fe0"/><rect x="15.6" y="1.2" width="2.4" height="2" fill="#e8332a"/><rect x="2" y="4.6" width="16" height="3.4" fill="#d3e8fb"/><rect x="0.5" y="9.9" width="19" height="8.6" fill="#eaf4ff" stroke="#1f4fd0" stroke-width="1"/><rect x="1" y="10.4" width="18" height="2.6" fill="#2a5fe0"/><rect x="15.6" y="10.6" width="2.4" height="2" fill="#e8332a"/><rect x="2" y="14" width="16" height="3.4" fill="#d3e8fb"/></g></svg>
<svg style="left:1159px;top:155px" width="20" height="20" viewBox="0 0 20 20"><g fill="none" stroke="#4a4a4f"><circle cx="10" cy="10" r="8.7" stroke-width="2.2"/><ellipse cx="10" cy="10" rx="3.8" ry="8.7" stroke-width="1.6"/><path d="M1.3 10 H18.7" stroke-width="1.5"/><path d="M3 5.3 Q10 7.5 17 5.3 M3 14.7 Q10 12.5 17 14.7" stroke-width="1.3"/></g></svg>
<svg style="left:1338px;top:155px" width="20" height="20" viewBox="0 0 20 20"><g fill="none" stroke="#4a4a4f"><circle cx="10" cy="10" r="8.7" stroke-width="2.2"/><ellipse cx="10" cy="10" rx="3.8" ry="8.7" stroke-width="1.6"/><path d="M1.3 10 H18.7" stroke-width="1.5"/><path d="M3 5.3 Q10 7.5 17 5.3 M3 14.7 Q10 12.5 17 14.7" stroke-width="1.3"/></g></svg>
<svg style="left:1256px;top:155px" width="20" height="20.4" viewBox="0 0 20 20.4"><path d="M0.2 13 L3 12.6 L6.6 18.6 L5 18.4 Z" fill="#101010"/><path d="M3.6 1.6 L1.4 13.4 L4.6 17.4 L4.8 2.4 Z" fill="#3f8f45"/><path d="M4.3 2.4 L15.5 2.2 L17.6 15.4 L5.2 17.6 Z" fill="#f0d822"/><path d="M4.6 0.5 L15.3 0.3 L15.6 2.5 L4.3 2.8 Z" fill="#8c9c72"/><path d="M6.8 4.2 L14.3 4 L15.7 14 L7.3 15.6 Z" fill="#e9efb6"/><path d="M6.9 6.2 L14.6 5.8 M7 8.4 L14.9 7.9 M7.1 10.6 L15.2 10 M7.2 12.8 L15.5 12.1" stroke="#d6d85c" stroke-width="0.7"/><path d="M7.8 19.2 L19.8 14.4 L20.2 15.8 L9 20.3 Z" fill="#c47a1c"/><path d="M7.8 19.2 L10.4 18.2 L11 19.5 L9 20.3 Z M13 17.2 L14.4 16.6 L14.9 17.9 L13.5 18.5 Z M16.4 15.8 L17.6 15.3 L18.1 16.6 L16.9 17.1Z" fill="#1a1208"/></svg>
<svg style="left:1887px;top:158px" width="17" height="15" viewBox="0 0 17 15"><path d="M1.6 1.4 L7.6 7.4 L1.6 13.4 M9 1.4 L15 7.4 L9 13.4" fill="none" stroke="#4a4a4f" stroke-width="2.3" stroke-linecap="round" stroke-linejoin="round"/></svg>
<div class="a" style="left:708px;top:87px;width:382px;height:354px;background:#f2f2f2;border:1px solid #cccccc;box-shadow:2.5px 2.5px 2.5px rgba(0,0,0,.5);"></div>
<div class="a" style="left:709px;top:88px;width:32px;height:354px;background:#f0f0f0;"></div>
<div class="a" style="left:741px;top:197px;width:348px;height:1px;background:#d9d9d9;"></div>
<div class="a" style="left:741px;top:305px;width:348px;height:1px;background:#d9d9d9;"></div>
<span class="t" style="left:745.80px;top:96.21px;font-size:18.3px;color:#000;transform:scaleX(1.0219);">Tab neu la<u>d</u>en</span>
<span class="t" style="left:745.80px;top:122.21px;font-size:18.3px;color:#000;transform:scaleX(1.0222);">Tab stu<u>m</u>mschalten</span>
<span class="t" style="left:745.80px;top:148.21px;font-size:18.3px;color:#000;transform:scaleX(1.0310);">Tab an<u>h</u>eften</span>
<span class="t" style="left:745.80px;top:174.21px;font-size:18.3px;color:#000;transform:scaleX(1.0291);">Tab <u>k</u>lonen</span>
<span class="t" style="left:745.80px;top:205.21px;font-size:18.3px;color:#000;transform:scaleX(1.0124);">Alle Tabs a<u>u</u>swählen</span>
<span class="t" style="left:745.80px;top:231.21px;font-size:18.3px;color:#000;transform:scaleX(1.0184);">Tab als <u>L</u>esezeichen hinzufügen</span>
<span class="t" style="left:745.80px;top:257.21px;font-size:18.3px;color:#000;transform:scaleX(1.0110);">Tab <u>v</u>erschieben</span>
<span class="t" style="left:745.80px;top:283.21px;font-size:18.3px;color:#000;transform:scaleX(1.0061);">Tab an Gerät <u>s</u>enden</span>
<span class="t" style="left:745.80px;top:314.21px;font-size:18.3px;color:#6d6d6d;transform:scaleX(0.9848);"><u>R</u>echte Tabs schließen</span>
<span class="t" style="left:745.80px;top:340.21px;font-size:18.3px;color:#000;transform:scaleX(1.0062);"><u>A</u>ndere Tabs schließen</span>
<span class="t" style="left:745.80px;top:366.21px;font-size:18.3px;color:#6d6d6d;transform:scaleX(1.0199);"><u>G</u>eschlossenen Tab wiederherstellen</span>
<span class="t" style="left:745.80px;top:392.21px;font-size:18.3px;color:#000;">Tab s<u>c</u>hließen</span>
<span class="t" style="left:745.80px;top:418.61px;font-size:18.3px;color:#000;"><u>P</u>rotect This Tab(s)</span>
<svg style="left:1072px;top:259px" width="8" height="12" viewBox="0 0 8 12"><path d="M1.5 1.5 L6 6 L1.5 10.5" fill="none" stroke="#444" stroke-width="1.2"/></svg>
<svg style="left:1072px;top:285px" width="8" height="12" viewBox="0 0 8 12"><path d="M1.5 1.5 L6 6 L1.5 10.5" fill="none" stroke="#444" stroke-width="1.2"/></svg>
<div class="a" style="left:711px;top:414px;width:24px;height:24px;background:#91c9f7;"></div>
<svg style="left:711px;top:414px" width="24" height="24" viewBox="0 0 24 24"><path d="M6.5 12 L10.5 16 L17.5 8" fill="none" stroke="#222" stroke-width="1.8"/></svg>
<svg style="left:1689px;top:1015px" width="19.5" height="19.5" viewBox="0 0 19.5 19.5"><rect x="1" y="8.2" width="17.4" height="10.6" rx="1" fill="#8c8c8c" stroke="#5e5e5e" stroke-width="0.9"/><rect x="2.2" y="12" width="15" height="5.6" fill="#a4a4a4"/><path d="M0.8 4.4 L17.4 0.8 L18.2 4.2 L1.6 7.8 Z" fill="#6a6a6a" stroke="#4e4e4e" stroke-width="0.7"/><path d="M3.6 3.8 L6.2 6.8 M8.2 2.8 L10.8 5.8 M12.8 1.8 L15.4 4.8" stroke="#e8e8e8" stroke-width="1.6"/><path d="M1 8.4 H18.4 V11.2 H1 Z" fill="#5c5c5c"/><path d="M3.4 8.4 L5.4 11.2 M8 8.4 L10 11.2 M12.6 8.4 L14.6 11.2" stroke="#e8e8e8" stroke-width="1.6"/></svg>
<svg style="left:1727px;top:1014.5px" width="18.5" height="20.5" viewBox="0 0 18.5 20.5"><path d="M9.2 0.4 C11.6 2 14.6 2.8 17.8 2.8 C18 10.8 15.6 16.6 9.2 20.2 C2.8 16.6 0.4 10.8 0.6 2.8 C3.8 2.8 6.8 2 9.2 0.4 Z" fill="#800000"/><text x="9.3" y="12.6" text-anchor="middle" font-family="Liberation Sans,sans-serif" font-weight="700" font-size="9.5" fill="#fff" textLength="11" lengthAdjust="spacingAndGlyphs">uo</text></svg>
<svg style="left:1764px;top:1015px" width="20" height="20" viewBox="0 0 20 20"><rect x="0.6" y="0.6" width="18.8" height="18.8" rx="4.2" fill="#1f1f1f" stroke="#f4f4f4" stroke-width="1.2"/><circle cx="6.2" cy="13.6" r="3.2" fill="#e4e4e4"/><circle cx="13.8" cy="13.6" r="3.2" fill="#e4e4e4"/></svg>
<svg style="left:1801.5px;top:1015px" width="19.5" height="19.5" viewBox="0 0 19.5 19.5"><rect x="1.2" y="0.8" width="17" height="18" rx="2.2" fill="#6f8a86" stroke="#b4e4e2" stroke-width="1.1"/><text x="9.8" y="16.4" text-anchor="middle" font-family="Liberation Sans,sans-serif" font-weight="700" font-size="18" fill="#bdeceb">S</text><path d="M1.2 8 L0 9.8 L1.2 11.6 M18.2 8 L19.4 9.8 L18.2 11.6" fill="#b4e4e2"/></svg>
<div class="a" style="left:1204px;top:1043px;width:200px;height:37px;background:#3a4147;"></div>
<div class="a" style="left:192px;top:1077px;width:190px;height:3px;background:#8ea6b7;"></div>
<div class="a" style="left:485px;top:1077px;width:190px;height:3px;background:#8ea6b7;"></div>
<div class="a" style="left:1008px;top:1077px;width:190px;height:3px;background:#8ea6b7;"></div>
<div class="a" style="left:1204px;top:1077px;width:200px;height:3px;background:#8ea6b7;"></div>
<svg style="left:12px;top:1050.5px" width="20.5" height="20.5" viewBox="0 0 20.5 20.5"><path d="M0 2.9 L8.3 1.7 V9.7 H0 Z M9.4 1.55 L20.5 0 V9.7 H9.4 Z M0 10.8 H8.3 V18.8 L0 17.6 Z M9.4 10.8 H20.5 V20.5 L9.4 18.95 Z" fill="#fff"/></svg>
<span class="t" style="left:220.38px;top:1055.19px;font-size:14.9px;color:#fff;transform:scaleX(0.9779);">Posteingang - 2002An...</span>
<span class="t" style="left:513.79px;top:1055.19px;font-size:14.9px;color:#fff;transform:scaleX(1.0144);">D:\Test\Profilordner\c...</span>
<span class="t" style="left:1036.18px;top:1055.19px;font-size:14.9px;color:#fff;transform:scaleX(1.0044);">Übersicht - Mozilla Fir...</span>
<span class="t" style="left:1237.49px;top:1055.19px;font-size:14.9px;color:#fff;transform:scaleX(1.0274);">Mozilla Firefox</span>
<span class="t" style="left:1792.36px;top:1055.19px;font-size:14.9px;color:#fff;transform:scaleX(0.9258);">18:41:03</span>
<svg style="left:61px;top:1051px" width="20" height="20" viewBox="0 0 20 20"><path d="M0.8 2.4 L3.8 1.6 L4 14 L14 17.6 L14 19.6 L0.8 15.6 Z" fill="#e02a20"/><path d="M3.8 1.6 L5 2.6 L5 13.4 L4 14 Z" fill="#b01c14"/><path d="M5.6 0.8 L11 0.1 L12.2 1.2 L12.2 5.6 L6 6.2 Z" fill="#f0d418"/><path d="M5.6 0.8 L11 0.1 L12.2 1.2 L6.8 2 Z" fill="#fff06a"/><path d="M4.6 6 L10.8 5.5 L10.8 9.5 L4.6 10 Z" fill="#2aa83a"/><path d="M13.6 3.6 L17.4 2.4 L19.4 5.6 L15.6 7.6 Z" fill="#32b040"/><path d="M4.6 10 L12.4 9.5 L12.4 13.6 L4.6 14.2 Z" fill="#2a62e0"/><path d="M9.6 11.4 L13.2 11 L13.4 14.6 L9.8 15 Z" fill="#48a8e8"/><path d="M12.6 8 L18.8 7.4 L19 15.6 L14 17.6 L14 14.6 L12.6 14 Z" fill="#a04cb0"/><path d="M12.6 8 L15 7.8 L15 14.8 L14 14.6 L12.6 14Z" fill="#c078d0"/></svg>
<svg style="left:106px;top:1052px" width="22" height="19" viewBox="0 0 22 19"><rect x="3.6" y="0.8" width="17.6" height="12.4" rx="1" fill="#d8e4ec" stroke="#9aa6b0" stroke-width="1.1"/><rect x="5" y="2.2" width="14.8" height="9.6" fill="#e6f6ff"/><path d="M5.4 8.4 L8.6 5 L11 8 L13.6 4.4 L16.4 8.6 L19.4 5.6" fill="none" stroke="#2a8ad8" stroke-width="1.2"/><path d="M10 13.4 H15 L16.4 17 H8.6 Z" fill="#b8c0c8"/><rect x="7.4" y="16.8" width="10.4" height="1.6" fill="#a0a8b0"/><rect x="0.4" y="5.4" width="2.6" height="12.8" fill="#b8bcc0"/><rect x="0.9" y="6.6" width="1.6" height="1.8" fill="#30d030"/></svg>
<svg style="left:152px;top:1051.5px" width="21.5" height="20" viewBox="0 0 21.5 20"><path d="M2.6 5.6 A10 9.6 0 0 1 19.6 6.4" fill="none" stroke="#fff" stroke-width="1.3"/><ellipse cx="10.8" cy="11" rx="9.8" ry="8.6" fill="none" stroke="#fff" stroke-width="1.5"/><path d="M2 14.6 L7.4 8.6 L10.4 12 L13.8 7.8 L19.6 14.4 C17.6 18.2 14.4 19.6 10.8 19.6 C7 19.6 3.6 17.8 2 14.6Z" fill="#fff"/><circle cx="7" cy="6.4" r="1.4" fill="#fff"/><path d="M4.4 17.6 L10.2 10.8" stroke="#2d3237" stroke-width="1"/></svg>
<svg style="left:197px;top:1051px" width="20.5" height="20" viewBox="0 0 20.5 20"><circle cx="10.4" cy="10" r="9.6" fill="#1a6fd0"/><path d="M4 4 C7 0.6 13.6 0 17.4 3.6 C20.8 7 20.4 13.4 17 16.8 C18 13 17 9.6 14 8 C10 6 6.6 7.2 4 4Z" fill="#5ab4f4"/><path d="M2 14 C1 10 2.6 6.6 5.4 5.2 C7 8 10 8.4 13 9.4 L14.6 14 L8 18.6 C5 18.4 2.8 16.6 2 14Z" fill="#1c3f94"/><path d="M2.4 9.4 L12.6 8 L14.8 14.2 L4.4 16.6 Z" fill="#f4f6fa"/><path d="M2.4 9.4 L8.6 12.6 L12.6 8" fill="none" stroke="#c0c8d4" stroke-width="0.9"/></svg>
<svg style="left:402px;top:1053px" width="17" height="16.8" viewBox="0 0 17 16.8"><path d="M0.4 7.6 C1 3 4.4 0.2 8.8 0.2 C13.6 0.2 16.6 3.6 16.6 8.2 V10 H5.6 C5.8 12.6 8 13.8 10.6 13.8 C12.6 13.8 14.4 13.2 15.8 12.4 V15.6 C14.2 16.4 12.2 16.8 10 16.8 C5 16.8 1.8 13.8 1.8 9.4 C1.8 6.6 3.2 4.4 5.4 3.2 C2.8 3.8 1.2 5.4 0.4 7.6 Z M5.7 7 H11.8 C11.8 5 10.6 3.6 8.8 3.6 C7 3.6 5.9 5 5.7 7 Z" fill="#0a7ae0"/></svg>
<svg style="left:447px;top:1053px" width="18.5" height="15.6" viewBox="0 0 18.5 15.6"><path d="M0.2 0.8 H6.4 L8 2.4 H18.3 V15.4 H0.2 Z" fill="#f5b81a"/><path d="M0.2 3.6 H18.3 V15.4 H0.2 Z" fill="#ffd65a"/><path d="M3.4 9 H15.2 V15.4 H12.2 V12 H6.4 V15.4 H3.4 Z" fill="#2a8ae2"/></svg>
<svg style="left:490px;top:1050.5px" width="20.5" height="20.5" viewBox="0 0 20.5 20.5"><path d="M1 2.6 H3 V1 H5 V2.6 H7 V1 H9 V2.6 H11 V1 H13 V2.6 H15.4 V19.6 H1 Z" fill="#f6f6f6" stroke="#8a8a8a" stroke-width="0.8"/><rect x="2.4" y="9.6" width="11.6" height="8.4" fill="#58c040"/><rect x="2.4" y="9.6" width="11.6" height="3" fill="#a8e088"/><path d="M17.2 1.6 L19.6 3.4 L12.2 15 L9.4 16.8 L9.8 13.4 Z" fill="#f0a020" stroke="#b06a08" stroke-width="0.5"/><path d="M17.2 1.6 L19.6 3.4 L19 4.4 L16.6 2.6Z" fill="#e02828"/></svg>
<svg style="left:693px;top:1051px" width="20" height="19.6" viewBox="0 0 20 19.6"><rect x="0.4" y="0.4" width="19.2" height="18.8" rx="2.4" fill="#e8962a" stroke="#f6cf94" stroke-width="0.9"/><circle cx="12.8" cy="7" r="3.1" fill="none" stroke="#fff" stroke-width="1.6"/><path d="M10.6 9.2 L4.6 15.2 M6.4 13.4 L8.2 15.2 M4.6 15.2 L6 16.6" fill="none" stroke="#fff" stroke-width="1.6"/></svg>
<svg style="left:738.5px;top:1051.5px" width="20" height="19" viewBox="0 0 20 19"><path d="M8 2 L18.6 1.2 L19.4 16 L9.4 18.6 Z" fill="#e6eef4"/><path d="M8 2 L18.6 1.2 L18.8 3.6 L7.2 4.6Z" fill="#8acce8"/><path d="M8 2 L0.6 12.6 L9.4 18.6 L7.2 4.6Z" fill="#3a9cc8"/><path d="M0.6 12.6 L9.4 18.6 L8.6 14 L2.6 10Z" fill="#2a7ca8"/></svg>
<svg style="left:784.5px;top:1051px" width="20.6" height="20" viewBox="0 0 20.6 20"><ellipse cx="10.3" cy="10" rx="10.1" ry="9.8" fill="#23a823"/><path d="M5.8 10.2 L8.9 13.3 L14.8 7.2" fill="none" stroke="#fff" stroke-width="2"/></svg>
<svg style="left:832px;top:1051px" width="15.5" height="19" viewBox="0 0 15.5 19"><path d="M3.2 2.4 L11.2 0.6 L14.6 15.6 L6.4 17.8 Z" fill="#d44" /><path d="M2 3.6 L10.6 1.4 L13.6 16 L5 18.4 Z" fill="#f6f6f6" stroke="#b8b8b8" stroke-width="0.5"/><path d="M7.6 6.4 C9 7.6 10.6 9 10 10.6 C9.6 11.6 8.6 11.6 8.2 11 L8.6 12.8 H7 L7.4 11.2 C6.8 11.8 5.6 11.6 5.4 10.6 C5 9 6.8 8 7.6 6.4Z" fill="#222"/></svg>
<svg style="left:877px;top:1051px" width="20" height="19.6" viewBox="0 0 20 19.6"><rect x="0.5" y="0.5" width="19" height="18.6" fill="#c8c8c8" stroke="#f0f0f0" stroke-width="1"/><path d="M19.5 0.5 V19.1 H0.5" fill="none" stroke="#707070" stroke-width="1"/><text x="10" y="16.2" text-anchor="middle" font-family="Liberation Serif,serif" font-weight="700" font-size="18.5" fill="#e81010">D</text></svg>
<svg style="left:922.5px;top:1052.5px" width="20.5" height="18.6" viewBox="0 0 20.5 18.6"><rect x="2" y="0.6" width="16.4" height="12.6" rx="1" fill="#e8305a"/><rect x="0.2" y="2.6" width="2.2" height="8.6" fill="#f06a8a"/><rect x="18" y="2.6" width="2.2" height="8.6" fill="#f06a8a"/><rect x="3.8" y="2.2" width="12.8" height="9" fill="#3a3a3a"/><path d="M3.8 2.2 H16.6 L3.8 9Z" fill="#6a6a6a"/><rect x="5" y="13.2" width="10.4" height="1.6" fill="#c02048"/><path d="M3 15.4 H17.4 L20 18.2 H0.4 Z" fill="#e8305a"/><path d="M2.6 16.8 H17.8" stroke="#2d3237" stroke-width="0.6"/></svg>
<svg style="left:969.5px;top:1051.5px" width="19" height="18.5" viewBox="0 0 19 18.5"><path d="M0.8 4.8 L3 1.2 L6.8 2 L7.6 4 L18 7.4 V17.8 L2 14.6 L0.8 12 Z" fill="#b4b4b4" stroke="#7a7a7a" stroke-width="0.7"/><path d="M0.8 4.8 L2 6.6 V14.6 L0.8 12Z" fill="#8a8a8a"/><circle cx="10.4" cy="11.4" r="4" fill="#e8e8e8" stroke="#6a6a6a" stroke-width="0.9"/><circle cx="10.4" cy="11.4" r="2" fill="#5a7a8a"/><rect x="13.6" y="7.2" width="3" height="1.6" fill="#e8e8e8"/></svg>
<svg style="left:1013px;top:1051px" width="20" height="20" viewBox="0 0 20 20"><rect width="20" height="20" fill="#fdfdfd"/><circle cx="10.6" cy="10" r="8.2" fill="none" stroke="#f0a848" stroke-width="1.2"/><path d="M5 8 C7 4.6 12.4 3.8 15 6.6 C17 9 16 14 12.4 15.4 C9 16.6 5.4 15 4.6 12 Z" fill="#f08a18"/><path d="M11.6 6.4 L15.8 5.2 L16.4 10.6 L13 11Z" fill="#f8b040"/><rect x="8.8" y="9" width="3.6" height="4.2" fill="#4a4a52"/><path d="M2 8.6 H7.4 M3 15.6 L8 13.4" stroke="#5a5a62" stroke-width="1.2"/><path d="M13 14.8 L17.6 17.6" stroke="#88a8c8" stroke-width="1.6"/></svg>
<svg style="left:1213.7px;top:1051px" width="20.4" height="20.4" viewBox="0 0 20.1 20.3"><g><circle cx="9.8" cy="8.6" r="7.4" fill="url(#ffb)"/><path d="M13.5 0 C15.4 1.4 17 3 18 5 C19.7 7.6 20.4 10.6 19.5 13.6 C18 18 13.6 20.6 9.4 20.25 C4.6 19.8 0.4 16 0.1 10.8 C-0.1 7.6 0.8 4.8 2.4 2.5 C2.5 3.4 2.9 4.0 3.4 4.5 C4.4 3.8 5.6 3.8 6.6 4.2 C6.8 5.4 8.2 6.2 9.8 6.6 C9.6 7.6 8.4 8 7.4 8.2 C6.6 8.9 6.2 9.8 6.5 10.6 C7.3 11.5 8.4 11.5 9.2 11.2 C9.9 11 10.7 11.3 11.1 12 C10.6 13.2 9.4 14 7.8 14.4 C9.2 15.2 11.2 15.2 12.6 14.2 C14.2 13 15 11 14.6 9 C14.3 7.4 13.2 6.4 12.2 5.4 C11.4 4.4 11.2 2.6 11.9 1.6 C12.3 0.9 12.9 0.4 13.5 0 Z" fill="url(#ffo)"/></g></svg>
<svg style="left:1670.5px;top:1055.5px" width="17" height="10.5" viewBox="0 0 17 10.5"><path d="M0.6 9.8 L8.5 1.2 L16.4 9.8" fill="none" stroke="#fff" stroke-width="1.4"/></svg>
<svg style="left:1698.5px;top:1054px" width="21" height="13" viewBox="0 0 21 13"><rect x="5" y="3.6" width="14.4" height="8.6" fill="none" stroke="#fff" stroke-width="1.1"/><rect x="6.6" y="5.2" width="11.2" height="5.4" fill="#fff"/><rect x="19.6" y="6" width="1.2" height="3.8" fill="#fff"/><path d="M1.4 0.4 V2.6 M3.8 0.4 V2.6 M0.4 2.8 H4.8 V4.8 Q4.8 6.4 2.6 6.4 Q0.4 6.4 0.4 4.8Z M2.6 6.4 V9.4 H5" fill="none" stroke="#fff" stroke-width="1"/></svg>
<svg style="left:1728px;top:1052.5px" width="22" height="17" viewBox="0 0 22 17"><rect x="4.6" y="0.6" width="16.4" height="11.6" fill="none" stroke="#fff" stroke-width="1.2"/><path d="M12.8 12.2 V15.6 M8.4 15.8 H17.2" stroke="#fff" stroke-width="1.2"/><rect x="0.6" y="1.6" width="3.4" height="4" fill="#2d3237" stroke="#fff" stroke-width="1"/><path d="M2.3 5.6 V15.8 H8.4" fill="none" stroke="#fff" stroke-width="1.1"/><path d="M1.7 2.6 V4 M2.9 2.6 V4" stroke="#fff" stroke-width="0.6"/></svg>
<svg style="left:1758.5px;top:1052px" width="21" height="18" viewBox="0 0 21 18"><path d="M0.8 6.4 H3.6 L7.4 2.4 V15.6 L3.6 11.6 H0.8 Z" fill="none" stroke="#fff" stroke-width="1.1" stroke-linejoin="round"/><path d="M10.2 6.8 Q11.8 9 10.2 11.2" fill="none" stroke="#fff" stroke-width="1.1"/><path d="M13 4.4 Q16 9 13 13.6" fill="none" stroke="#b8bcc0" stroke-width="1"/><path d="M16 2 Q20.4 9 16 16" fill="none" stroke="#7e858a" stroke-width="1"/></svg>
<svg style="left:1868.5px;top:1051px" width="21" height="20" viewBox="0 0 21 20"><path d="M0.7 0.7 H20.1 V16.2 H13.4 L10.4 19.2 L7.4 16.2 H0.7 Z" fill="none" stroke="#fff" stroke-width="1.3"/></svg>
<div class="a" style="left:1914px;top:1043px;width:1px;height:37px;background:#787e83;"></div>
</body></html>
